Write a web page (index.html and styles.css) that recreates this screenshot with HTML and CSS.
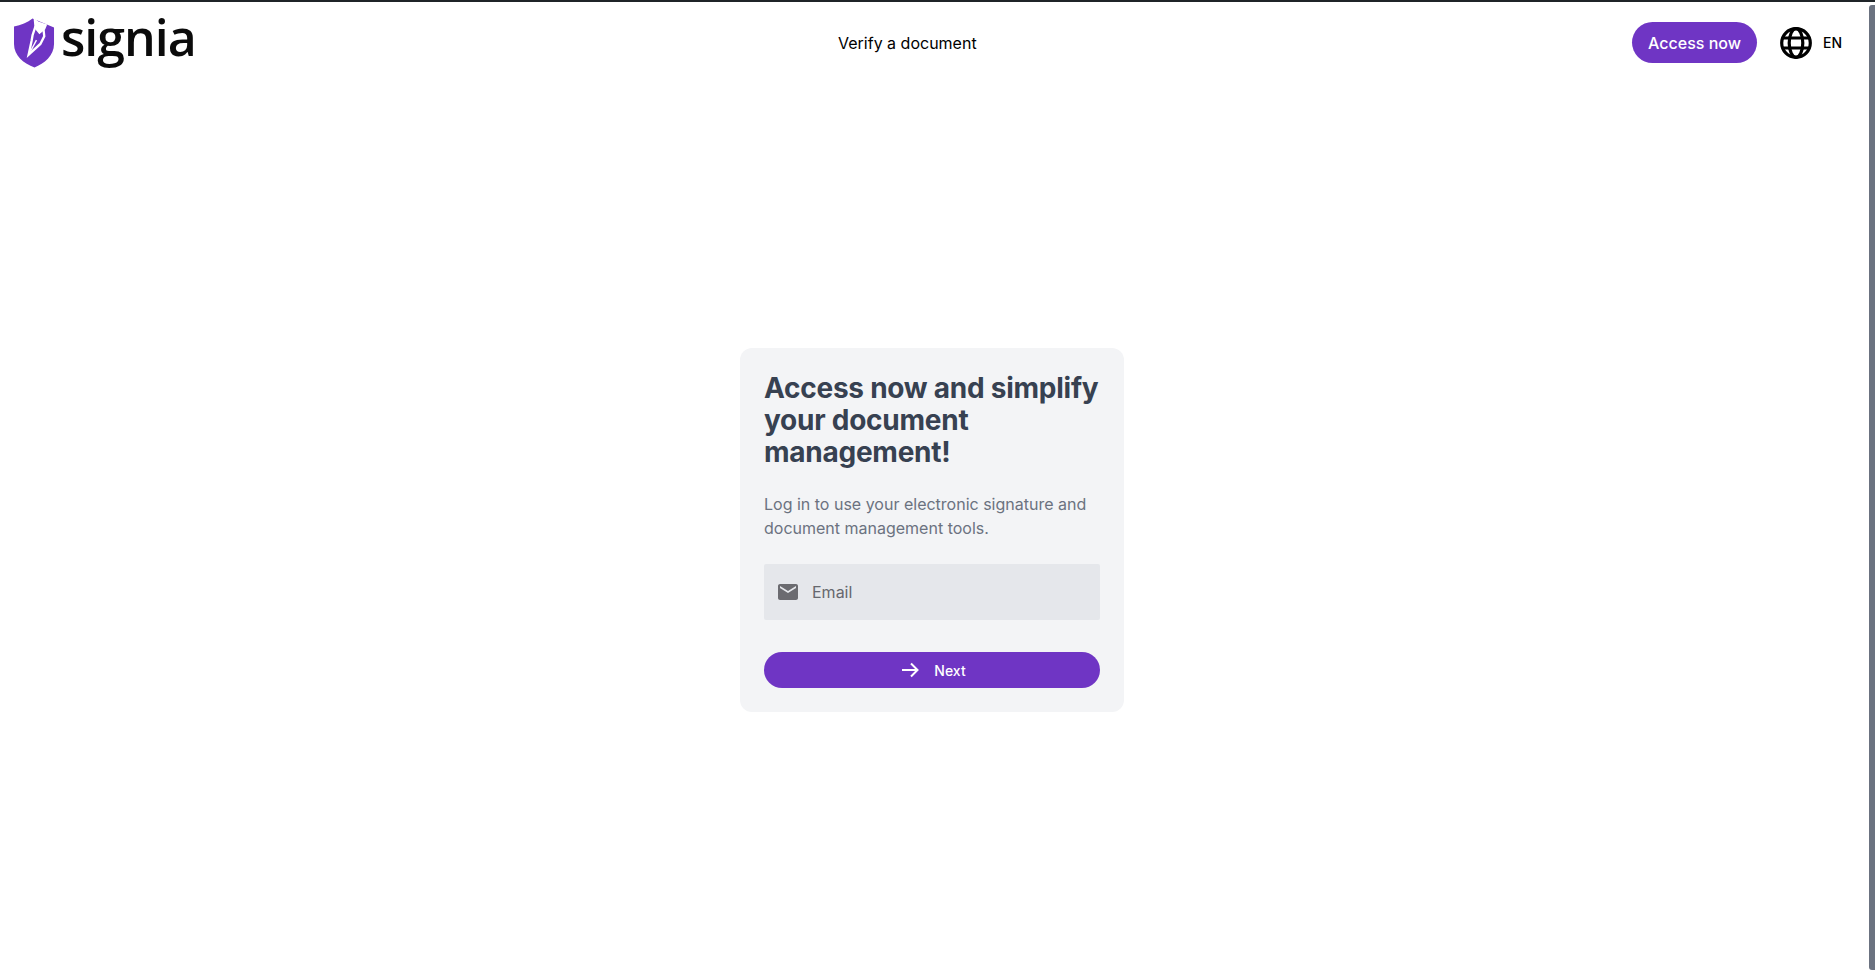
FILE: index.html
```html
<!DOCTYPE html>
<html lang="en">

<head>
    <meta charset="UTF-8">
    <meta name="viewport" content="width=device-width, initial-scale=1.0">
    <title>Signia</title>
    <link rel="stylesheet" href="styles.css">
</head>

<body>
    <!-- Header -->
    <header class="site-header">
        <a href="#" class="logo">
            <svg class="logo-mark" viewBox="0 0 42 50" aria-hidden="true">
                <path class="shield" d="M0 8 C7 7 14 4 19 0 L41 9 L41 26 C41 38 31 46 21 50 C10 46 0 38 0 26 Z"/>
                <path class="nib-top" d="M20 -1 L25 3 L34 6 L32 11 L26 16 L21 10 Z"/>
                <path class="nib-line" d="M22 8 L19 17 L18 23 L15 37 L27 26 L31 18 L30 9"/>
                <path class="nib-slit" d="M15 37 L23 22"/>
            </svg>
            <span class="logo-text">signia</span>
        </a>
        <nav class="nav-center">
            <a href="#" class="nav-link">Verify a document</a>
        </nav>
        <div class="nav-right">
            <a href="#" class="btn-access">Access now</a>
            <button type="button" class="lang-btn">
                <svg class="globe" viewBox="0 0 32 32" aria-hidden="true">
                    <circle cx="16" cy="16" r="14.3"/>
                    <ellipse cx="16" cy="16" rx="6.8" ry="14.3"/>
                    <path d="M3 11h26M3 21h26"/>
                </svg>
                <span>EN</span>
            </button>
        </div>
    </header>

    <!-- Login card -->
    <main class="login-section">
        <form class="login-card">
            <h1 class="login-title">Access now and simplify your document management!</h1>
            <p class="login-text">Log in to use your electronic signature and document management tools.</p>
            <label class="input-group">
                <svg class="input-icon" viewBox="0 0 24 24" aria-hidden="true">
                    <path d="M20 4H4c-1.1 0-1.99.9-1.99 2L2 18c0 1.1.9 2 2 2h16c1.1 0 2-.9 2-2V6c0-1.1-.9-2-2-2zm0 4-8 5-8-5V6l8 5 8-5v2z"/>
                </svg>
                <input type="email" name="email" placeholder="Email">
            </label>
            <button type="button" class="btn-next">
                <svg class="btn-icon" viewBox="0 0 24 24" aria-hidden="true">
                    <path d="M4 12h15M13 5.5l6.5 6.5-6.5 6.5"/>
                </svg>
                <span>Next</span>
            </button>
        </form>
    </main>

    <!-- Page scrollbar -->
    <div class="scroll-thumb"></div>
</body>

</html>
```

FILE: styles.css
```css
/* Global Styles */
* {
    margin: 0;
    padding: 0;
    box-sizing: border-box;
}

html,
body {
    height: 100%;
    overflow: hidden;
}

body {
    display: flex;
    flex-direction: column;
    background-color: #fff;
    color: #000;
    font-family: 'Inter', sans-serif;
    font-size: 16px;
    line-height: 24px;
}

a {
    color: inherit;
    text-decoration: none;
}

/* Header */
.site-header {
    display: grid;
    grid-template-columns: 824px 1fr auto;
    align-items: center;
    height: 88px;
    padding: 0 33px 5px 14px;
    border-top: 2px solid #1f2428;
}

.logo {
    display: flex;
    align-items: center;
    gap: 6px;
}

.logo-mark {
    width: 41px;
    height: 50px;
    overflow: visible;
}

.shield {
    fill: #6f35c4;
}

.nib-top {
    fill: #fff;
}

.nib-line {
    fill: none;
    stroke: #fff;
    stroke-width: 2.4;
}

.nib-slit {
    stroke: #fff;
    stroke-width: 1.4;
}

.logo-text {
    margin-bottom: 12px;
    font-family: 'Open Sans', sans-serif;
    font-size: 50px;
    line-height: 52px;
    font-weight: 600;
    letter-spacing: -1px;
    color: #0b0b0b;
}

.nav-right {
    display: flex;
    align-items: center;
    gap: 23px;
}

.btn-access {
    display: block;
    padding: 8.5px 16px;
    border-radius: 21px;
    background-color: #6f35c4;
    color: #fff;
    font-weight: 500;
}

.lang-btn {
    display: flex;
    align-items: center;
    gap: 11px;
    border: none;
    background: none;
    color: #000;
    font-family: inherit;
    font-size: 14px;
    font-weight: 500;
}

.globe {
    width: 32px;
    height: 32px;
    fill: none;
    stroke: #000;
    stroke-width: 3.2;
}

/* Login card */
.login-section {
    flex: 1;
    display: flex;
    align-items: center;
    justify-content: center;
    padding-right: 11px;
}

.login-card {
    width: 384px;
    padding: 24px;
    border-radius: 12px;
    background-color: #f3f4f6;
}

.login-title {
    margin-bottom: 24px;
    color: #374151;
    font-size: 28px;
    line-height: 32px;
    font-weight: 700;
    letter-spacing: -0.25px;
}

.login-text {
    margin-bottom: 24px;
    color: #6b7280;
}

.input-group {
    display: flex;
    align-items: center;
    gap: 12px;
    height: 56px;
    padding: 0 12px;
    margin-bottom: 32px;
    border-radius: 2px;
    background-color: #e5e7eb;
}

.input-icon {
    width: 24px;
    height: 24px;
    fill: #6b6b70;
}

.input-group input {
    flex: 1;
    min-width: 0;
    border: none;
    outline: none;
    background: none;
    font-family: inherit;
    font-size: 16px;
}

.input-group input::placeholder {
    color: #66686e;
}

.btn-next {
    display: flex;
    align-items: center;
    justify-content: center;
    gap: 12px;
    width: 100%;
    height: 36px;
    border: none;
    border-radius: 18px;
    background-color: #6f35c4;
    color: #fff;
    font-family: inherit;
    font-size: 14px;
    font-weight: 500;
}

.btn-icon {
    width: 24px;
    height: 24px;
    fill: none;
    stroke: #fff;
    stroke-width: 2;
}

/* Scrollbar */
.scroll-thumb {
    position: fixed;
    top: 5px;
    right: 0;
    width: 6px;
    height: 965px;
    border-radius: 3px 0 0 3px;
    background-color: #6b7280;
}
```
